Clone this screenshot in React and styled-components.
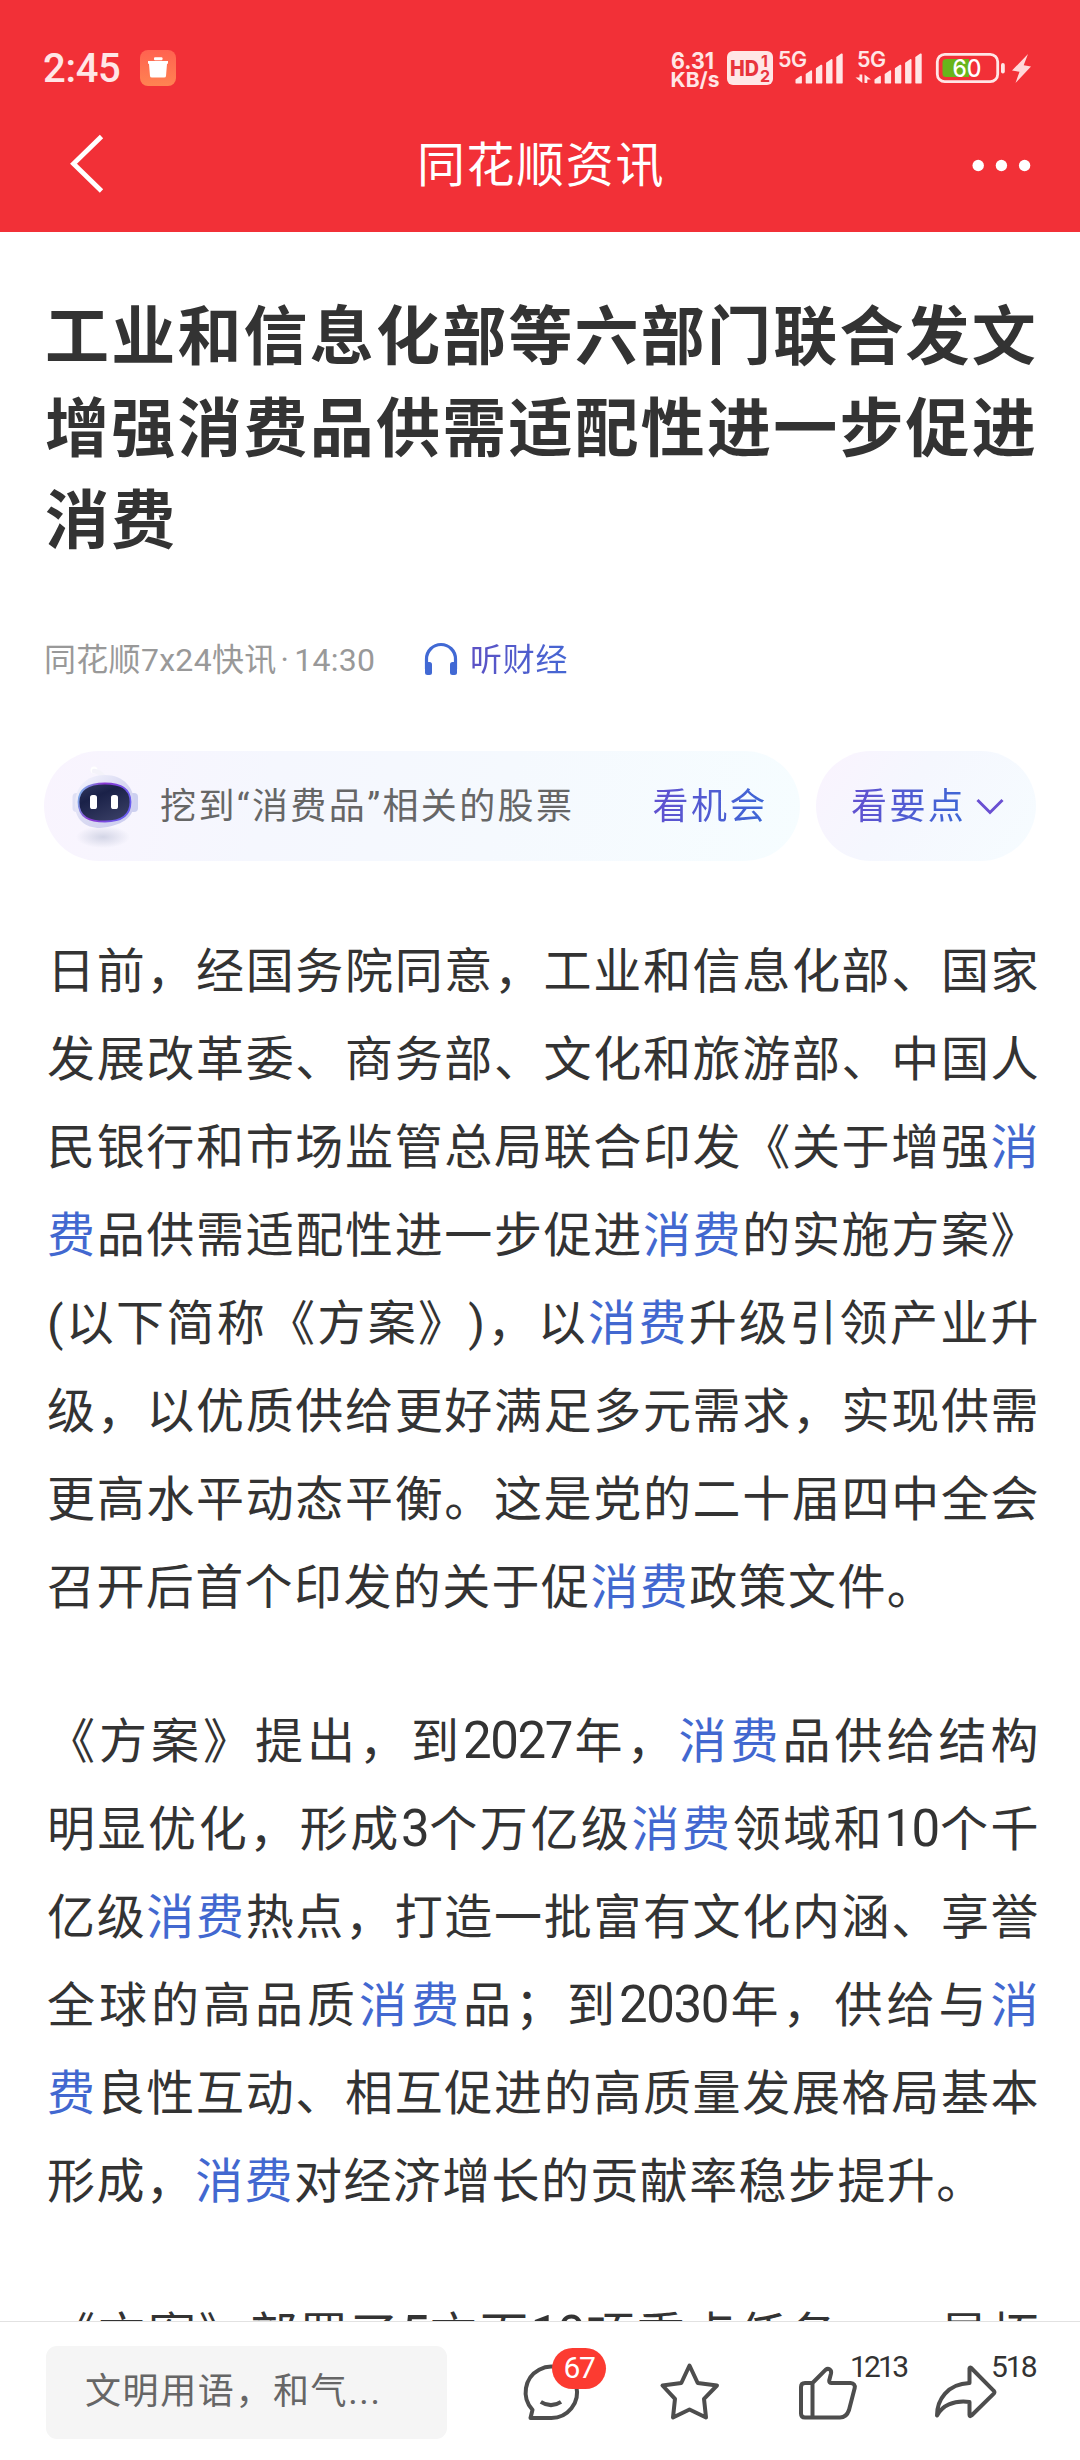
import React from "react";
import styled, { createGlobalStyle } from "styled-components";

const Global = createGlobalStyle`
  * { box-sizing: border-box; }
  body {
    margin: 0;
    background: #fff;
    font-family: Roboto, "Noto Sans CJK SC", sans-serif;
    text-spacing-trim: space-all;
    color: #333;
  }
`;

const Page = styled.div`
  width: 1080px;
  height: 2460px;
  display: flex;
  flex-direction: column;
  overflow: hidden;
  background: #fff;
`;

const Header = styled.header`
  height: 232px;
  flex: none;
  background: #f23037;
  color: #fff;
  display: flex;
  flex-direction: column;
`;

const StatusBar = styled.div`
  height: 100px;
  padding: 40px 49px 0 43px;
  display: flex;
  align-items: flex-start;
`;

const Clock = styled.span`
  font-size: 40px;
  font-weight: 500;
  line-height: 57px;
  letter-spacing: -0.3px;
  color: #ffe6e6;
  width: 97px;
`;

const Spacer = styled.div`
  flex: 1;
`;

const Glyph = styled.svg`
  display: block;
  flex: none;
  overflow: visible;
  margin-left: ${(p) => p.$gap || 0}px;
  text {
    font-family: Inter, sans-serif;
  }
`;

const NavBar = styled.div`
  flex: 1;
  display: flex;
  align-items: center;
  justify-content: space-between;
  padding: 0 49px 0 68px;
`;

const NavTitle = styled.h1`
  margin: 0 14px 0 -3px;
  font-size: 48px;
  font-weight: 400;
  line-height: 70px;
  letter-spacing: 1.6px;
`;

const NavSide = styled.div`
  width: 62px;
  display: flex;
  justify-content: ${(p) => (p.$end ? "flex-end" : "flex-start")};
`;

const Article = styled.main`
  flex: 1;
  min-height: 0;
  overflow: hidden;
  padding: 60px 0 0 45px;
`;

const Headline = styled.h2`
  margin: 0;
  font-size: 64px;
  font-weight: 700;
  line-height: 92px;
  letter-spacing: 2.2px;
  white-space: nowrap;
`;

const Meta = styled.div`
  height: 46px;
  margin-top: 69px;
  display: flex;
  align-items: center;
  font-size: 32px;
  line-height: 46px;
`;

const Source = styled.span`
  width: 379px;
  margin-left: -1px;
  color: #999;
  white-space: nowrap;
  letter-spacing: ${(p) => p.$ls}px;
`;

const Dot = styled.span`
  margin: 0 5px 0 4px;
`;

const Tint = styled.span`
  background: linear-gradient(100deg, ${(p) => p.$from}, ${(p) => p.$to});
  -webkit-background-clip: text;
  background-clip: text;
  color: transparent;
  letter-spacing: ${(p) => p.$ls || 0}px;
`;

const Listen = styled.div`
  display: flex;
  align-items: center;
  gap: 11px;
`;

const Pills = styled.div`
  display: flex;
  gap: 16px;
  margin: 68px 0 0 -1px;
`;

const Pill = styled.div`
  width: ${(p) => p.$w}px;
  height: 110px;
  border-radius: 55px;
  padding: 2px ${(p) => p.$pr}px 0 ${(p) => p.$pl}px;
  display: flex;
  align-items: center;
  justify-content: space-between;
  font-size: 36px;
  line-height: 54px;
  white-space: nowrap;
  background: ${(p) => p.$bg};
`;

const Prompt = styled.span`
  flex: 1;
  margin: 0 0 0 19px;
  color: #666;
  letter-spacing: 2.4px;
`;

const Body = styled.div`
  margin-top: 67px;
  width: 995px;
  font-size: 48px;
  line-height: 88px;
  letter-spacing: 1.4px;
`;

const Paragraph = styled.div`
  margin-bottom: 66px;
`;

const Line = styled.div`
  height: 88px;
  padding-left: 2px;
  white-space: nowrap;
  text-align: justify;
  text-align-last: ${(p) => (p.$last ? "left" : "justify")};
`;

const Term = styled.a`
  color: #4268d0;
`;

const Num = styled.span`
  font-size: 51px;
  line-height: 1;
  letter-spacing: -1.4px;
`;

const Footer = styled.footer`
  height: 139px;
  flex: none;
  border-top: 1px solid #e2e2e2;
  background: #fff;
  display: flex;
  align-items: flex-start;
  padding: 24px 0 0 46px;
`;

const Input = styled.div`
  width: 401px;
  height: 93px;
  border-radius: 11px;
  background: #f5f5f5;
  color: #666;
  font-size: 36px;
  line-height: 93px;
  letter-spacing: 1.6px;
  padding-left: 39px;
  white-space: nowrap;
`;

const Action = styled.div`
  position: relative;
  width: 64px;
  height: 70px;
  margin: 13px 0 0 ${(p) => p.$gap}px;
`;

const Badge = styled.span`
  position: absolute;
  left: 33px;
  top: -11px;
  width: 54px;
  height: 41px;
  border-radius: 21px;
  background: #fc3b31;
  color: #fff;
  font-size: 30px;
  line-height: 40px;
  letter-spacing: -1.4px;
  text-align: center;
`;

const Count = styled.span`
  position: absolute;
  left: ${(p) => p.$x}px;
  top: -10px;
  font-size: 30px;
  line-height: 36px;
  letter-spacing: ${(p) => p.$ls}px;
  color: #333;
`;

const pale = "#ffe6e6";

function Bars({ x }) {
  return [0, 1, 2, 3, 4].map((i) => {
    const l = x + i * 10.2;
    const t = 77 - i * 5.6;
    return (
      <path
        key={i}
        fill={pale}
        d={`M${l} ${t + 2.5} L${l + 5} ${t - 1} Q${l + 6.4} ${t - 1.6} ${l + 6.4} ${t} V82.4 Q${l + 6.4} 83.6 ${l + 5.2} 83.6 H${l + 1.2} Q${l} 83.6 ${l} 82.4 Z`}
      />
    );
  });
}

function Status() {
  return (
    <StatusBar>
      <Clock>2:45</Clock>
      <Glyph width="36" height="60" viewBox="140 40 36 60">
        <defs>
          <linearGradient id="trash" x1="0" y1="0" x2="0" y2="1">
            <stop offset="0" stopColor="#ff6250" />
            <stop offset="1" stopColor="#ff8352" />
          </linearGradient>
        </defs>
        <rect x="140" y="50" width="36" height="36" rx="8" fill="url(#trash)" />
        <rect x="154" y="57.3" width="8.5" height="3" rx="1" fill="#fff" />
        <path d="M148 61h20v2q0 1-1 1l-1 12q0 1.500-2 1.500h-12q-2 0-2-1.500l-1-12q-1 0-1-1z" fill="#fff" />
      </Glyph>
      <Spacer />
      <Glyph width="48" height="60" viewBox="672 40 48 60">
        <g fill={pale} fontWeight="700">
          <text x="671" y="68.500" fontSize="22.500" textLength="43" lengthAdjust="spacingAndGlyphs">6.31</text>
          <text x="670.500" y="86.500" fontSize="20.500" textLength="49" lengthAdjust="spacingAndGlyphs">KB/s</text>
        </g>
      </Glyph>
      <Glyph $gap={7} width="46" height="60" viewBox="727 40 46 60">
        <rect x="727" y="51" width="46" height="34" rx="6" fill={pale} />
        <g fill="#e8343c" fontWeight="800">
          <text x="730" y="75.500" fontSize="21" textLength="29" lengthAdjust="spacingAndGlyphs">HD</text>
          <text x="761" y="67" fontSize="16" fontWeight="700">1</text>
          <text x="760" y="81.500" fontSize="16" fontWeight="700">2</text>
        </g>
      </Glyph>
      <Glyph $gap={6} width="64" height="60" viewBox="779 40 64 60">
        <text x="778" y="66.500" fill={pale} fontSize="21.500" fontWeight="600" textLength="29">5G</text>
        <Bars x={795.5} />
      </Glyph>
      <Glyph $gap={13} width="66" height="60" viewBox="856 40 66 60">
        <text x="857" y="66.500" fill={pale} fontSize="21.500" fontWeight="600" textLength="29">5G</text>
        <path d="M859.500 74.500h2.800v8.500L855.500 77.500h4zM864.500 83v-8.500L871 79.500h-3.700V83z" fill={pale} />
        <Bars x={874.5} />
      </Glyph>
      <Glyph $gap={14} width="69" height="60" viewBox="936 40 69 60">
        <rect x="937.300" y="54.300" width="60.400" height="27.400" rx="7.500" fill="none" stroke={pale} strokeWidth="2.800" />
        <path d="M946 59h23v18h-23q-3.500 0-3.500-3.500v-11q0-3.500 3.500-3.500z" fill="#69b41b" />
        <rect x="1001" y="63" width="3.800" height="10.500" rx="1.900" fill={pale} />
        <text x="952.500" y="77" fill="#fff" fontSize="24" fontWeight="500" textLength="29" lengthAdjust="spacingAndGlyphs">60</text>
      </Glyph>
      <Glyph $gap={7} width="19" height="60" viewBox="1012 40 19 60">
        <path d="M1028 54L1012 70.500l7.500 1.200L1015.500 83L1031 66.500l-7.300-1.300z" fill="#ffd9da" />
      </Glyph>
    </StatusBar>
  );
}

function Robot() {
  return (
    <Glyph width="70" height="90" viewBox="72 763 70 90">
      <defs>
        <linearGradient id="shell" x1="0" y1="0" x2="1" y2="1">
          <stop offset="0" stopColor="#f8f7ff" />
          <stop offset="0.500" stopColor="#d9daf2" />
          <stop offset="1" stopColor="#c9c9ee" />
        </linearGradient>
        <linearGradient id="rim" x1="0" y1="0" x2="1" y2="0.300">
          <stop offset="0" stopColor="#7cc8ee" />
          <stop offset="0.450" stopColor="#8a35d0" />
          <stop offset="1" stopColor="#6a5cf0" />
        </linearGradient>
        <linearGradient id="visor" x1="0" y1="0" x2="0.600" y2="1">
          <stop offset="0" stopColor="#353c62" />
          <stop offset="0.400" stopColor="#1a2148" />
          <stop offset="1" stopColor="#363c62" />
        </linearGradient>
        <radialGradient id="shade">
          <stop offset="0" stopColor="#d3d5e6" />
          <stop offset="1" stopColor="#d3d5e6" stopOpacity="0" />
        </radialGradient>
      </defs>
      <ellipse cx="104" cy="838" rx="27" ry="11" fill="url(#shade)" />
      <circle cx="95" cy="771" r="3.500" fill="#fff" />
      <path d="M95 772q6 1 9 5" stroke="#f4f3fa" strokeWidth="4.500" strokeLinecap="round" fill="none" />
      <rect x="73.500" y="794" width="8" height="19" rx="4" fill="#dfe0f5" />
      <rect x="130" y="794" width="9" height="19" rx="4" fill="#cdd0f0" />
      <path d="M76 806C76 788 87 776 106 776S135 789 135 804S122 827 101 829C86 829 76 820 76 806Z" fill="url(#shell)" />
      <path d="M79.500 803C79.500 788 92 784.500 106 784.500S131.500 788 131.500 803S121 822.500 106 822.500S79.500 819 79.500 803Z" fill="url(#visor)" stroke="url(#rim)" strokeWidth="1.800" />
      <rect x="91" y="796" width="7" height="14" rx="2.600" fill="#fff" />
      <rect x="112" y="796" width="7" height="14" rx="2.600" fill="#fff" />
    </Glyph>
  );
}

const X = () => <Term>消费</Term>;

const stroke = {
  fill: "none",
  stroke: "#4d4d4d",
  strokeWidth: 4,
  strokeLinejoin: "round",
  strokeLinecap: "round",
};

export default function App() {
  return (
    <Page>
      <Global />
      <Header>
        <Status />
        <NavBar>
          <NavSide>
            <Glyph width="36" height="60" viewBox="68 136 36 60">
              <path d="M101.500 136.500L73.500 163.800L101.500 191" fill="none" stroke="#fff" strokeWidth="4.800" />
            </Glyph>
          </NavSide>
          <NavTitle>同花顺资讯</NavTitle>
          <NavSide $end>
            <Glyph width="60" height="60" viewBox="971 136 60 60">
              <circle cx="978.200" cy="165.500" r="5.700" fill="#fff" />
              <circle cx="1001.400" cy="165.500" r="5.700" fill="#fff" />
              <circle cx="1024.600" cy="165.500" r="5.700" fill="#fff" />
            </Glyph>
          </NavSide>
        </NavBar>
      </Header>

      <Article>
        <Headline>
          工业和信息化部等六部门联合发文
          <br />
          增强消费品供需适配性进一步促进
          <br />
          消费
        </Headline>
        <Meta>
          <Source $ls={0.3}>
            同花顺7x24快讯<Dot>·</Dot>14:30
          </Source>
          <Listen>
            <Glyph width="36" height="36" viewBox="0 0 36 36">
              <path d="M3.500 27V17A14.500 14.500 0 0 1 32.500 17V27" fill="none" stroke="#4169d4" strokeWidth="3.200" />
              <rect x="2" y="20" width="7" height="13" rx="2.500" fill="#4169d4" />
              <rect x="27" y="20" width="7" height="13" rx="2.500" fill="#4169d4" />
            </Glyph>
            <Tint $from="#5d50c4" $to="#4468d4" $ls={0.7}>听财经</Tint>
          </Listen>
        </Meta>
        <Pills>
          <Pill $w={756} $pl={27} $pr={32} $bg="linear-gradient(105deg, #f9f4fe 0%, #f5f7fe 30%, #f5f9fe 60%, #f6fdff 100%)">
            <Robot />
            <Prompt>挖到“消费品”相关的股票</Prompt>
            <Tint $from="#6350cf" $to="#3b68d6" $ls={2.5}>看机会</Tint>
          </Pill>
          <Pill $w={220} $pl={35} $pr={32} $bg="linear-gradient(125deg, #f9f4fe 8%, #f5f7fe 40%, #f6fcff 100%)">
            <Tint $from="#6350cf" $to="#3b68d6" $ls={2.4}>看要点</Tint>
            <Glyph width="28" height="20" viewBox="0 0 28 20">
              <path d="M1.500 3L14 15.500L26.500 3" fill="none" stroke="#6a50d2" strokeWidth="3" />
            </Glyph>
          </Pill>
        </Pills>
        <Body>
          <Paragraph>
            <Line>日前，经国务院同意，工业和信息化部、国家</Line>
            <Line>发展改革委、商务部、文化和旅游部、中国人</Line>
            <Line>民银行和市场监管总局联合印发《关于增强<Term>消</Term></Line>
            <Line><Term>费</Term>品供需适配性进一步促进<X />的实施方案》</Line>
            <Line>(以下简称《方案》)，以<X />升级引领产业升</Line>
            <Line>级，以优质供给更好满足多元需求，实现供需</Line>
            <Line>更高水平动态平衡。这是党的二十届四中全会</Line>
            <Line $last>召开后首个印发的关于促<X />政策文件。</Line>
          </Paragraph>
          <Paragraph>
            <Line>《方案》提出，到<Num>2027</Num>年，<X />品供给结构</Line>
            <Line>明显优化，形成<Num>3</Num>个万亿级<X />领域和<Num>10</Num>个千</Line>
            <Line>亿级<X />热点，打造一批富有文化内涵、享誉</Line>
            <Line>全球的高品质<X />品；到<Num>2030</Num>年，供给与<Term>消</Term></Line>
            <Line><Term>费</Term>良性互动、相互促进的高质量发展格局基本</Line>
            <Line $last>形成，<X />对经济增长的贡献率稳步提升。</Line>
          </Paragraph>
          <Paragraph>
            <Line>《方案》部署了<Num>5</Num>方面<Num>19</Num>项重点任务，一是拓</Line>
          </Paragraph>
        </Body>
      </Article>

      <Footer>
        <Input>文明用语，和气...</Input>
        <Action $gap={72}>
          <Glyph width="64" height="70" viewBox="519 2359 64 70">
            <path {...stroke} d="M551 2418H530.500L532.500 2409.800A25.700 25.700 0 1 1 551 2418Z" />
            <path {...stroke} strokeLinecap="butt" d="M540.800 2401.800Q551 2408.500 561 2401.800" />
          </Glyph>
          <Badge>67</Badge>
        </Action>
        <Action $gap={74}>
          <Glyph width="64" height="70" viewBox="657 2359 64 70">
            <path {...stroke} d="M689.500 2365.500L697.700 2383L717 2385.500L704 2398.800L706 2417.500L689.500 2409.500L673 2417.500L675 2398.800L662.500 2385.500L681.300 2383Z" />
          </Glyph>
        </Action>
        <Action $gap={74}>
          <Glyph width="64" height="70" viewBox="795 2359 64 70">
            <path {...stroke} d="M812.500 2383L825.500 2369.800C828.500 2367.500 831.800 2370 831 2373.500L829.200 2380.500Q829 2383 831.500 2383H850.500Q855.500 2383.500 854.700 2388L849 2410Q846.500 2417.500 840 2417.500H805Q801 2417.500 801 2413.500V2387Q801 2383 805 2383ZM812.500 2383V2417.500" />
          </Glyph>
          <Count $x={55} $ls={-2.8}>1213</Count>
        </Action>
        <Action $gap={74}>
          <Glyph width="64" height="70" viewBox="933 2359 64 70">
            <path {...stroke} d="M937 2415.500C937 2400 947 2384 969.500 2383V2368.500Q969.800 2367 971.200 2368L993.800 2390.800Q995 2392.300 993.800 2393.600L971.500 2415.500Q969.500 2417 969.500 2415V2402C953 2400 942 2406 937 2415.500Z" />
          </Glyph>
          <Count $x={58} $ls={-2}>518</Count>
        </Action>
      </Footer>
    </Page>
  );
}
